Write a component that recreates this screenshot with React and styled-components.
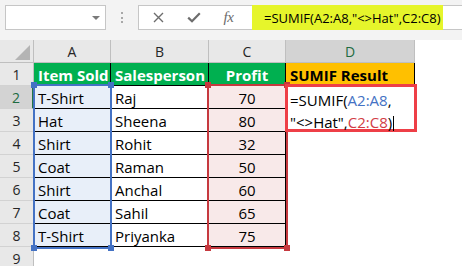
import React from 'react';
import styled, { createGlobalStyle } from 'styled-components';

const GlobalStyle = createGlobalStyle`
  * { box-sizing: border-box; }
  html, body { margin: 0; padding: 0; }
  body {
    width: 462px;
    height: 266px;
    overflow: hidden;
    background: #fff;
    font-family: "Open Sans", "Noto Sans", sans-serif;
    color: #000;
  }
`;

const Page = styled.div`
  display: flex;
  flex-direction: column;
  width: 462px;
  height: 266px;
  overflow: hidden;
`;

const Toolbar = styled.div`
  display: flex;
  align-items: flex-start;
  flex-shrink: 0;
  height: 40px;
  padding: 5px 0 0 5px;
  background: #f3f3f3;
`;

const NameBox = styled.div`
  width: 101px;
  height: 25px;
  background: #fff;
  border: 1px solid #c6c6c6;
  display: flex;
  align-items: center;
  justify-content: flex-end;
  padding-right: 5px;
`;

const Caret = styled.span`
  width: 0;
  height: 0;
  border-left: 4px solid transparent;
  border-right: 4px solid transparent;
  border-top: 4px solid #7a7a7a;
`;

const Grip = styled.div`
  width: 32px;
  height: 25px;
  display: flex;
  flex-direction: column;
  align-items: center;
  justify-content: center;
  gap: 2.5px;
`;

const Dot = styled.span`
  width: 2px;
  height: 2px;
  background: #a8a8a8;
`;

const FormulaBox = styled.div`
  flex: 1;
  height: 25px;
  margin-right: -1px;
  background: #fff;
  border: 1px solid #c6c6c6;
  border-right: none;
  display: flex;
  align-items: stretch;
  padding-left: 1px;
`;

const IconSlot = styled.div`
  width: ${(p) => p.$w}px;
  display: flex;
  align-items: center;
  justify-content: center;
  color: #6d6d6d;
`;

const Fx = styled.span`
  font-family: "Liberation Serif", "DejaVu Serif", serif;
  font-style: italic;
  font-size: 15px;
  line-height: 1;
  color: #6b6b6b;
  letter-spacing: -0.5px;
`;

const FormulaInput = styled.div`
  width: 191px;
  margin: -1px 0 -1px 6px;
  background: #e6f52b;
  display: flex;
  align-items: center;
  padding-left: 12px;
  font-size: 13px;
  line-height: 20px;
  white-space: nowrap;
  color: #000;
`;

const Sheet = styled.div`
  display: grid;
  grid-template-columns: 34px 77px 98px 77px 129px 1fr;
  grid-template-rows: repeat(10, 23px);
  background: #fff;
`;

const Corner = styled.div`
  grid-row: 1;
  grid-column: 1;
  background: #e8e8e8;
  border-right: 1px solid #bfbfbf;
  border-bottom: 1px solid #bfbfbf;
  display: flex;
  align-items: flex-end;
  justify-content: flex-end;
  padding: 0 3px 2px 0;
`;

const CornerTriangle = styled.span`
  width: 0;
  height: 0;
  border-left: 15px solid transparent;
  border-bottom: 15px solid #b4b4b4;
`;

const ColHead = styled.div`
  grid-row: 1;
  grid-column: ${(p) => p.$col};
  background: ${(p) => (p.$selected ? '#d3d3d3' : '#e8e8e8')};
  border-right: 1px solid #bfbfbf;
  border-bottom: 1px solid #bfbfbf;
  display: flex;
  align-items: flex-end;
  justify-content: center;
  font-size: 14px;
  line-height: 20px;
  color: ${(p) => (p.$selected ? '#1e6b41' : '#262626')};
`;

const RowHead = styled.div`
  grid-column: 1;
  grid-row: ${(p) => p.$row};
  background: ${(p) => (p.$selected ? '#d3d3d3' : '#e8e8e8')};
  border-right: ${(p) => (p.$selected ? '2px solid #217346' : '1px solid #bfbfbf')};
  border-bottom: 1px solid #d2d2d2;
  display: flex;
  align-items: flex-end;
  justify-content: center;
  font-size: 14px;
  line-height: 20px;
  color: ${(p) => (p.$selected ? '#1e6b41' : '#262626')};
`;

const Cell = styled.div`
  grid-row: ${(p) => p.$row};
  grid-column: ${(p) => p.$col};
  background: ${(p) => p.$fill || '#fff'};
  border-right: 1px solid #000;
  border-bottom: 1px solid #000;
  display: flex;
  align-items: flex-end;
  justify-content: ${(p) => (p.$center ? 'center' : 'flex-start')};
  padding: 0 4px;
  font-size: 15px;
  line-height: 20px;
  font-weight: ${(p) => (p.$bold ? 700 : 400)};
  color: ${(p) => p.$color || '#000'};
  white-space: nowrap;
  overflow: hidden;
`;

const RangeBox = styled.div`
  grid-column: ${(p) => p.$col};
  grid-row: 3 / 10;
  margin: -2px ${(p) => p.$side}px -2px ${(p) => p.$side}px;
  border: 2px solid ${(p) => p.$color};
  position: relative;
  z-index: 1;
  pointer-events: none;
`;

const Handle = styled.span`
  position: absolute;
  width: 6px;
  height: 6px;
  background: ${(p) => p.$color};
  ${(p) => (p.$v === 'top' ? 'top: -4px;' : 'bottom: -4px;')}
  ${(p) => (p.$h === 'left' ? 'left: -4px;' : 'right: -4px;')}
`;

const EditBox = styled.div`
  grid-column: 5;
  grid-row: 3 / 5;
  margin: -2px -2px 0 -1px;
  border: 3px solid #ee3f47;
  background: #fff;
  position: relative;
  z-index: 2;
  padding: 2px 0 0 2px;
  font-size: 15px;
  line-height: 22px;
  white-space: nowrap;
  color: #000;
`;

const Ref = styled.span`
  color: ${(p) => p.$color};
`;

const Cursor = styled.span`
  display: inline-block;
  width: 1px;
  height: 15px;
  margin-left: 1px;
  vertical-align: -3px;
  background: #000;
`;

const BLUE = '#4472c4';
const RED = '#c6393f';

const data = [
  ['T-Shirt', 'Raj', 70],
  ['Hat', 'Sheena', 80],
  ['Shirt', 'Rohit', 32],
  ['Coat', 'Raman', 50],
  ['Shirt', 'Anchal', 60],
  ['Coat', 'Sahil', 65],
  ['T-Shirt', 'Priyanka', 75],
];

const XIcon = () => (
  <svg width="11" height="11" viewBox="0 0 11 11">
    <path d="M1 1 L10 10 M10 1 L1 10" stroke="#6d6d6d" strokeWidth="1.4" fill="none" />
  </svg>
);

const CheckIcon = () => (
  <svg width="14" height="11" viewBox="0 0 14 11">
    <path d="M1.2 5.6 L5 9.2 L12.8 1.2" stroke="#6d6d6d" strokeWidth="2.2" fill="none" />
  </svg>
);

export default function App() {
  return (
    <>
      <GlobalStyle />
      <Page>
        <Toolbar>
          <NameBox>
            <Caret />
          </NameBox>
          <Grip>
            <Dot />
            <Dot />
            <Dot />
          </Grip>
          <FormulaBox>
            <IconSlot $w={36}>
              <XIcon />
            </IconSlot>
            <IconSlot $w={35}>
              <CheckIcon />
            </IconSlot>
            <IconSlot $w={35}>
              <Fx>fx</Fx>
            </IconSlot>
            <FormulaInput>=SUMIF(A2:A8,"&lt;&gt;Hat",C2:C8)</FormulaInput>
          </FormulaBox>
        </Toolbar>

        <Sheet>
          <Corner>
            <CornerTriangle />
          </Corner>
          {['A', 'B', 'C', 'D'].map((l, i) => (
            <ColHead key={l} $col={i + 2} $selected={l === 'D'}>
              {l}
            </ColHead>
          ))}

          {[1, 2, 3, 4, 5, 6, 7, 8, 9].map((n) => (
            <RowHead key={n} $row={n + 1} $selected={n === 2}>
              {n}
            </RowHead>
          ))}

          <Cell $row={2} $col={2} $fill="#00b050" $bold $color="#fff">Item Sold</Cell>
          <Cell $row={2} $col={3} $fill="#00b050" $bold $color="#fff">Salesperson</Cell>
          <Cell $row={2} $col={4} $fill="#00b050" $bold $color="#fff" $center>Profit</Cell>
          <Cell $row={2} $col={5} $fill="#ffc000" $bold>SUMIF Result</Cell>

          {data.map(([item, person, profit], i) => (
            <React.Fragment key={i}>
              <Cell $row={i + 3} $col={2} $fill="#e8eff9">{item}</Cell>
              <Cell $row={i + 3} $col={3}>{person}</Cell>
              <Cell $row={i + 3} $col={4} $fill="#f8e9e9" $center>{profit}</Cell>
            </React.Fragment>
          ))}

          <RangeBox $col={2} $side={-1} $color={BLUE}>
            <Handle $color={BLUE} $v="top" $h="left" />
            <Handle $color={BLUE} $v="top" $h="right" />
            <Handle $color={BLUE} $v="bottom" $h="left" />
            <Handle $color={BLUE} $v="bottom" $h="right" />
          </RangeBox>
          <RangeBox $col={4} $side={-2} $color={RED}>
            <Handle $color={RED} $v="top" $h="left" />
            <Handle $color={RED} $v="top" $h="right" />
            <Handle $color={RED} $v="bottom" $h="left" />
            <Handle $color={RED} $v="bottom" $h="right" />
          </RangeBox>

          <EditBox>
            <div>
              =SUMIF(<Ref $color={BLUE}>A2:A8</Ref>,
            </div>
            <div>
              "&lt;&gt;Hat",<Ref $color="#d23c45">C2:C8</Ref>)<Cursor />
            </div>
          </EditBox>
        </Sheet>
      </Page>
    </>
  );
}
